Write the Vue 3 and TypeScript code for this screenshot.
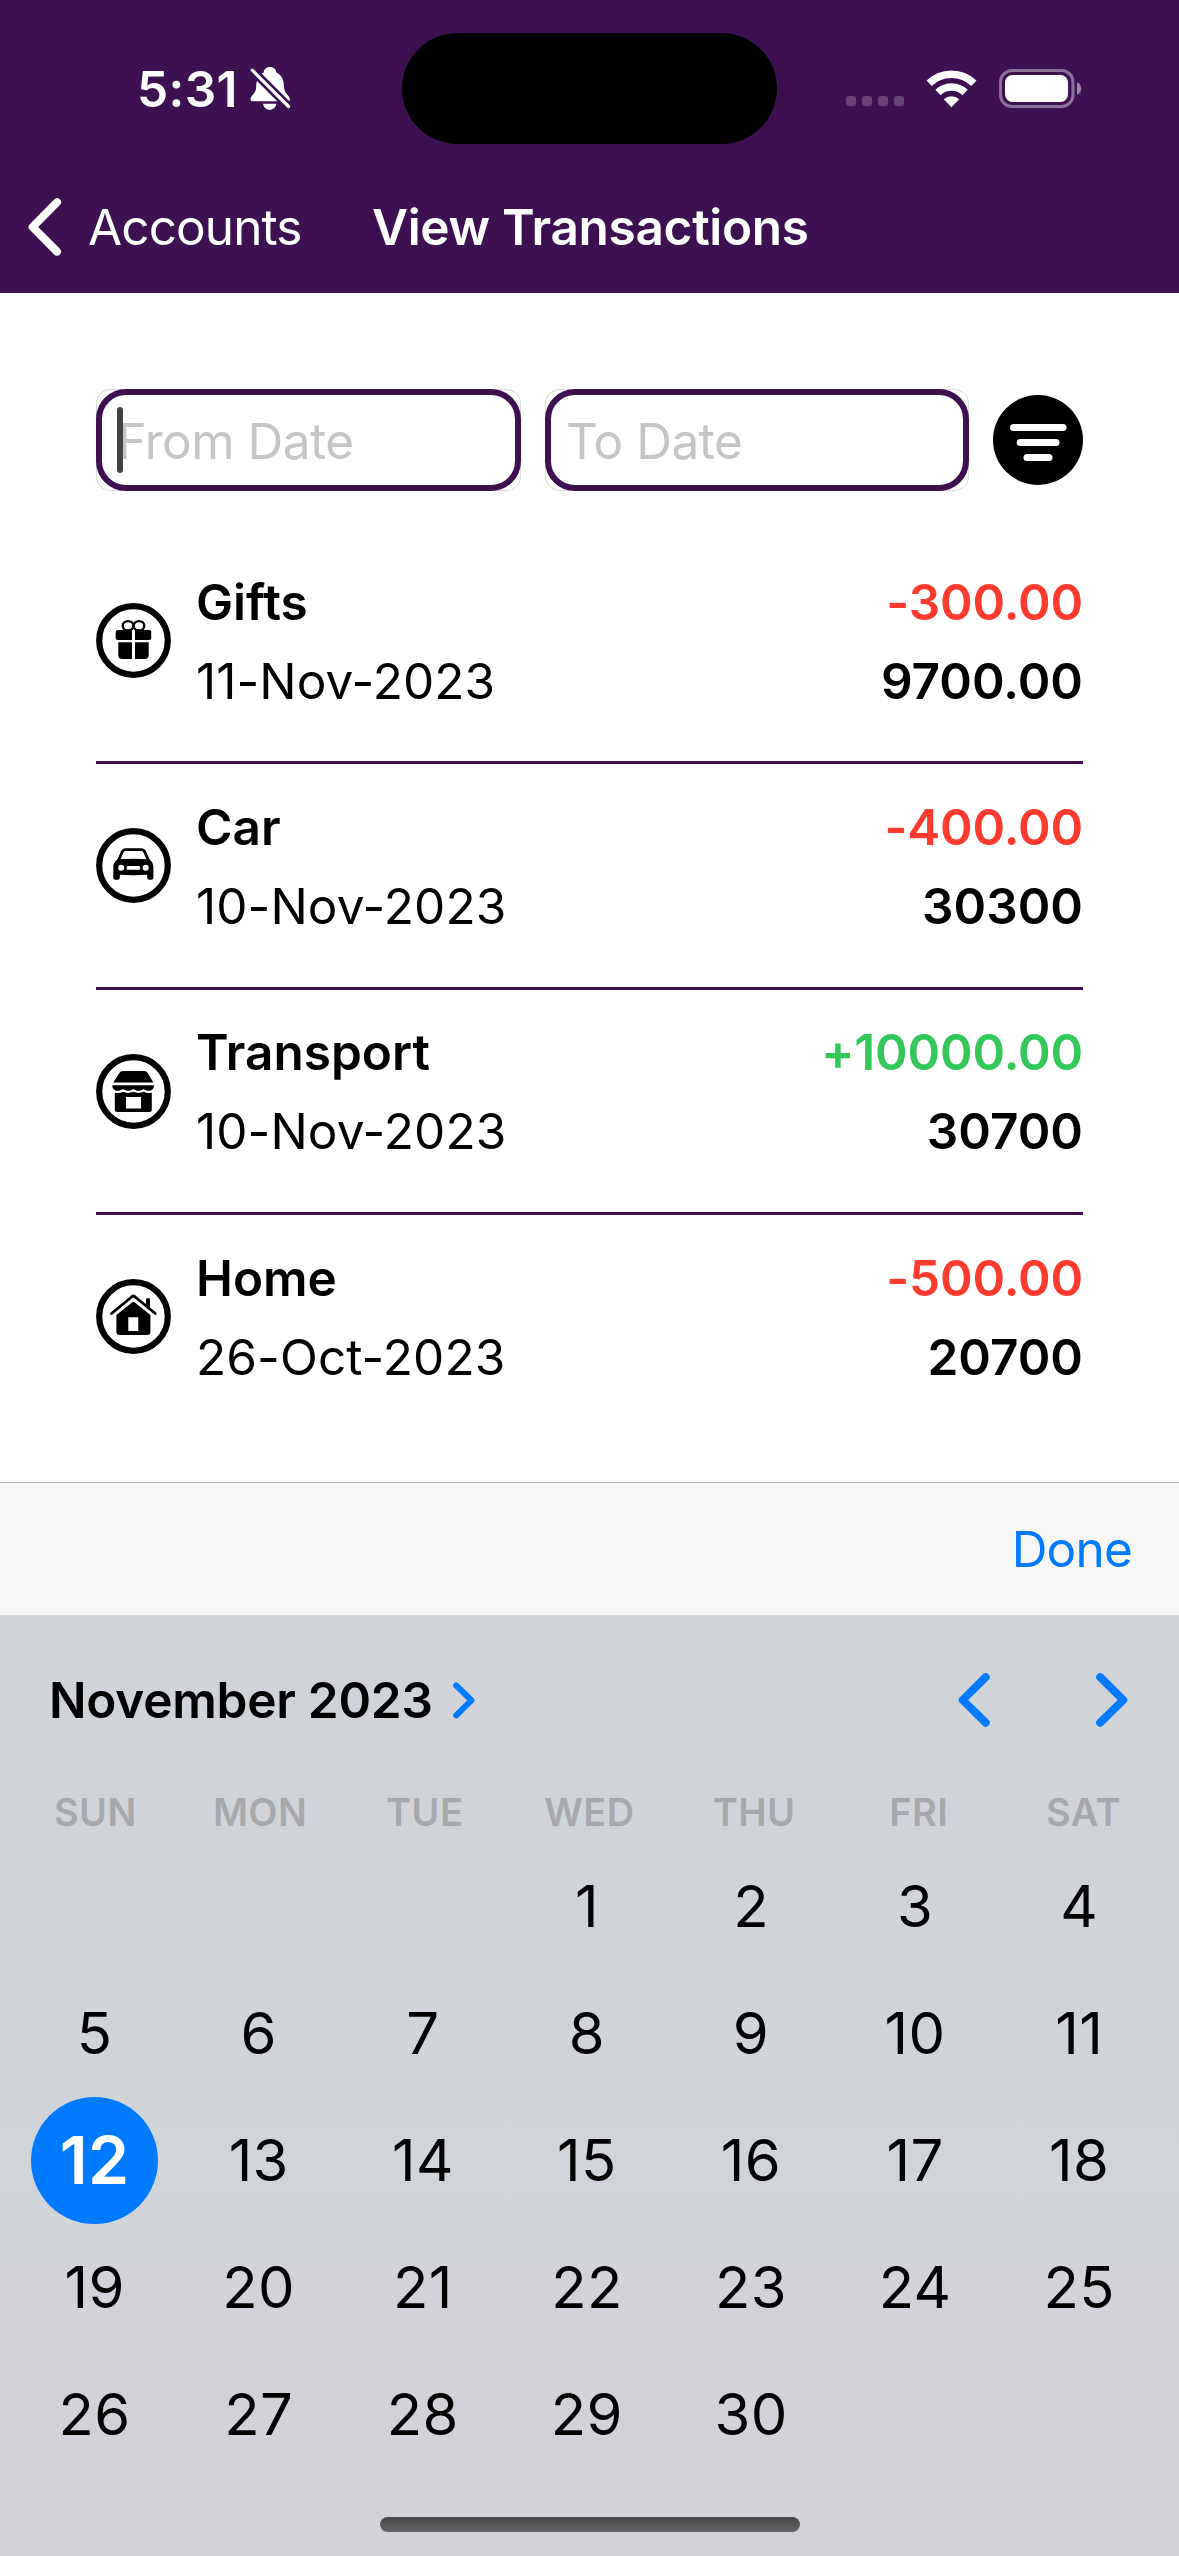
<script setup lang="ts">
type IconName = 'gift' | 'car' | 'shop' | 'home'

interface Transaction {
  icon: IconName
  category: string
  date: string
  amount: string
  balance: string
}

const transactions: Transaction[] = [
  { icon: 'gift', category: 'Gifts', date: '11-Nov-2023', amount: '-300.00', balance: '9700.00' },
  { icon: 'car', category: 'Car', date: '10-Nov-2023', amount: '-400.00', balance: '30300' },
  { icon: 'shop', category: 'Transport', date: '10-Nov-2023', amount: '+10000.00', balance: '30700' },
  { icon: 'home', category: 'Home', date: '26-Oct-2023', amount: '-500.00', balance: '20700' },
]

const weekdays: string[] = ['SUN', 'MON', 'TUE', 'WED', 'THU', 'FRI', 'SAT']
const leadingBlanks = 3
const days: (number | null)[] = [
  ...Array.from({ length: leadingBlanks }, () => null),
  ...Array.from({ length: 30 }, (_, i) => i + 1),
]
const selectedDay = 12
</script>

<template>
  <div class="screen">
    <header class="header">
      <div class="status">
        <div class="status-left">
          <span class="time">5:31</span>
          <svg class="bell" width="41" height="44" viewBox="0 0 41 44">
            <path fill="#fff" d="M20 0c4 0 6 2.600 6.300 5.400C32 8 34 13.500 34 20c0 6.500 6 8.500 6 12.200q0 2-2.200 2H2.700q-2.200 0-2.200-2C.5 28.500 6.200 26.500 6.200 20c0-6.500 2-12 7.500-14.600C14 2.600 16 0 20 0z" />
            <path fill="#fff" d="M13 36.800h13.400c-.6 3.600-3.200 6-6.700 6s-6.100-2.400-6.700-6z" />
            <path stroke="#3d1051" stroke-width="8.500" d="M-1 0L42 43" />
            <path stroke="#fff" stroke-width="3.200" stroke-linecap="round" d="M2.300 3.200L38.600 39.500" />
          </svg>
        </div>
        <div class="island"></div>
        <div class="status-right">
          <div class="dots"><i v-for="n in 4" :key="n"></i></div>
          <svg class="wifi" width="51" height="38" viewBox="0 0 51 38">
            <g fill="none" stroke="#fff" stroke-width="7.600">
              <path d="M3.140 13.340A32.200 32.200 0 0 1 47.860 13.340" />
              <path d="M11.950 22.470A19.500 19.500 0 0 1 39.050 22.470" />
            </g>
            <path fill="#fff" d="M17.800 29.300A11.200 11.200 0 0 1 33.200 29.300L25.500 37.200z" />
          </svg>
          <svg class="battery" width="83" height="40" viewBox="0 0 83 40">
            <rect x="1.500" y="1.500" width="72.500" height="36" rx="11.500" fill="none" stroke="#fff" stroke-opacity=".4" stroke-width="3" />
            <rect x="6" y="6" width="63" height="27" rx="7.500" fill="#fff" />
            <path fill="#fff" fill-opacity=".5" d="M78 13.300c2.600 1 4.200 3.400 4.200 6.200s-1.600 5.200-4.200 6.200z" />
          </svg>
        </div>
      </div>
      <nav class="nav">
        <svg class="back" width="34" height="58" viewBox="0 0 34 58">
          <path d="M29 4.200L4.600 29L29 53.600" fill="none" stroke="#fff" stroke-width="8" stroke-linecap="round" stroke-linejoin="round" />
        </svg>
        <span class="back-label">Accounts</span>
        <span class="title">View Transactions</span>
      </nav>
    </header>

    <main class="content">
      <div class="filters">
        <div class="field"><div class="field-box"><span>From Date</span><i class="caret"></i></div></div>
        <div class="field"><div class="field-box"><span>To Date</span></div></div>
        <svg class="filter" width="90" height="90" viewBox="0 0 90 90">
          <circle cx="45" cy="45" r="45" />
          <g stroke="#fff" stroke-width="7" stroke-linecap="round">
            <path d="M20.500 32.500H70" />
            <path d="M27.200 47.500H63" />
            <path d="M34 62.500H56" />
          </g>
        </svg>
      </div>

      <section class="list">
        <article v-for="t in transactions" :key="t.category" class="row">
          <svg class="icon" width="75" height="75" viewBox="0 0 75 75">
            <circle cx="37.500" cy="37.500" r="34.300" fill="none" stroke="#000" stroke-width="6.200" />
            <g v-if="t.icon === 'gift'">
              <g fill="none" stroke="#000" stroke-width="2.400">
                <ellipse cx="32" cy="22.800" rx="5.300" ry="4.700" />
                <ellipse cx="43" cy="22.800" rx="5.300" ry="4.700" />
              </g>
              <path d="M22 27H36V37H21.700a2 2 0 0 1-2-2V29.300a2.300 2.300 0 0 1 2.300-2.300zM39 27H53a2 2 0 0 1 2.200 2.300V35a2 2 0 0 1-2 2H39z" />
              <path d="M22.300 39.200H36V56H26.300a4 4 0 0 1-4-4zM39 39.200H52.700V52a4 4 0 0 1-4 4H39z" />
            </g>
            <g v-else-if="t.icon === 'car'">
              <path fill="none" stroke="#000" stroke-width="2.800" d="M22.300 33L26.300 23.800Q27.300 21.600 29.600 21.600H45.400Q47.700 21.600 48.700 23.800L52.700 33" />
              <path d="M22 31.300Q37.500 30 53 31.300C55.500 32.500 57.400 35.500 57.400 39V49.500Q57.400 51.700 55.400 51.700H53.300Q51.200 51.700 51.200 49.500V46.800Q37.500 47.500 23.800 46.800V49.500Q23.800 51.700 21.700 51.700H19.500Q17.300 51.700 17.300 49.500V39C17.300 35.500 19.500 32.500 22 31.300z" />
              <g fill="#fff">
                <circle cx="25.200" cy="39.800" r="3" />
                <circle cx="49.700" cy="39.800" r="3" />
                <rect x="30.600" y="38" width="13.600" height="3.800" rx="1.600" />
              </g>
            </g>
            <g v-else-if="t.icon === 'shop'">
              <path d="M27 17H48.200Q50.500 17 51.700 19L57.400 28.500H17.200L23.300 19Q24.500 17 27 17z" />
              <path d="M16.300 31.200H58C58 35 55.500 36.800 53 36.800C50.500 36.800 49.300 36 47.700 35C46 36 44.500 36.800 42.500 36.800S39 36 37.300 35C35.600 36 34.200 36.800 32.200 36.800S28.700 36 27 35C25.300 36 24 36.800 21.500 36.800C18.800 36.800 16.300 35 16.300 31.200z" />
              <path fill-rule="evenodd" d="M18.800 38.700Q24 39.800 27 37.800Q32 40 37.300 37.800Q42.500 40 47.700 37.800Q51 39.800 55.800 38.700V55.500Q55.800 58 53.300 58H21.300Q18.800 58 18.800 55.500zM30 43V54.500H45V43z" />
            </g>
            <g v-else>
              <path fill="none" stroke="#000" stroke-width="2.900" stroke-linecap="round" stroke-linejoin="round" d="M15.500 34.500L36.200 17.500Q37.400 16.600 38.600 17.500L59.300 34.500" />
              <path d="M50 20.200Q50 19.200 51 19.200H53Q54 19.200 54 20.200V29.500L50 26.300z" />
              <path fill-rule="evenodd" d="M36 23.400Q37.400 22.300 38.800 23.400L54.400 36V53Q54.400 56 51.400 56H23.400Q20.400 56 20.400 53V36zM32.300 38.200V52H42.300V38.200z" />
            </g>
          </svg>
          <div class="info">
            <div class="category">{{ t.category }}</div>
            <div class="date">{{ t.date }}</div>
          </div>
          <div class="figures">
            <div class="amount" :class="t.amount.startsWith('+') ? 'credit' : 'debit'">{{ t.amount }}</div>
            <div class="balance">{{ t.balance }}</div>
          </div>
        </article>
      </section>
    </main>

    <div class="toolbar"><span class="done">Done</span></div>

    <section class="picker">
      <div class="month-bar">
        <span class="month">November 2023</span>
        <svg class="month-chevron" width="22" height="37" viewBox="0 0 22 37">
          <path d="M3.200 3.400L18.400 18.300L3.200 33.400" />
        </svg>
        <svg class="prev" width="32" height="54" viewBox="0 0 32 54">
          <path d="M27.700 4.200L4.600 27L27.700 49.700" />
        </svg>
        <svg class="next" width="32" height="54" viewBox="0 0 32 54">
          <path d="M4.200 4.200L27.300 27L4.200 49.700" />
        </svg>
      </div>
      <div class="weekdays">
        <span v-for="w in weekdays" :key="w">{{ w }}</span>
      </div>
      <div class="days">
        <span v-for="(d, i) in days" :key="i" class="day" :class="{ selected: d === selectedDay }">
          <b v-if="d !== null">{{ d }}</b>
        </span>
      </div>
      <div class="home-indicator"></div>
    </section>
  </div>
</template>

<style>
body {
  margin: 0;
  background: #fff;
}
</style>

<style scoped>
.screen {
  width: 1179px;
  height: 2556px;
  display: flex;
  flex-direction: column;
  overflow: hidden;
  background: #fff;
  color: #000;
  font-family: Inter, "Liberation Sans", sans-serif;
  font-size: 49.5px;
  line-height: 60px;
  white-space: nowrap;
}
svg {
  display: block;
  flex: none;
}
.header {
  height: 293px;
  flex: none;
  background: #3d1051;
  color: #fff;
}
.status {
  height: 177px;
  display: grid;
  grid-template-columns: 402px 375px 402px;
  align-items: center;
}
.status-left {
  display: flex;
  align-items: center;
  padding-left: 137px;
}
.time {
  width: 113px;
  font-weight: 600;
  letter-spacing: 0.4px;
}
.island {
  height: 111px;
  border-radius: 56px;
  background: #000;
}
.status-right {
  display: flex;
  align-items: center;
  padding-left: 69px;
}
.dots {
  display: flex;
  gap: 6px;
  padding-top: 25px;
}
.dots i {
  width: 10px;
  height: 10px;
  border-radius: 3px;
  background: #664278;
}
.wifi {
  margin-left: 22px;
}
.battery {
  margin-left: 22px;
}
.nav {
  height: 100px;
  display: flex;
  align-items: center;
}
.back {
  margin-left: 28px;
}
.back-label {
  width: 284px;
  margin-left: 26px;
  letter-spacing: -0.9px;
}
.title {
  font-weight: 600;
  letter-spacing: -0.3px;
}
.content {
  height: 1189px;
  flex: none;
  box-sizing: border-box;
  padding: 96px 96px 0;
}
.filters {
  display: flex;
  align-items: center;
  gap: 24px;
  height: 102px;
}
.field {
  flex: 1;
  height: 102px;
  box-sizing: border-box;
  border-radius: 15px;
  box-shadow: inset 0 0 0 1px #d9d9d9;
}
.field-box {
  position: relative;
  height: 102px;
  box-sizing: border-box;
  border: 6px solid #3d1051;
  border-radius: 30px;
  background: #fff;
  display: flex;
  align-items: center;
  padding: 2px 0 0 15.5px;
  color: #c5c5c7;
  letter-spacing: -0.5px;
}
.caret {
  position: absolute;
  left: 15px;
  top: 12px;
  width: 6px;
  height: 66px;
  border-radius: 3px;
  background: #424242;
}
.list {
  padding-top: 48px;
}
.row {
  height: 225.33px;
  box-sizing: border-box;
  display: flex;
  border-bottom: 3px solid #3d1051;
}
.row:last-child {
  border-bottom: 0;
}
.icon {
  margin-top: 64px;
}
.info {
  padding: 32.7px 0 0 25px;
  flex: 1;
}
.figures {
  padding: 32.7px 0 0;
  text-align: right;
  font-weight: 600;
}
.category {
  font-weight: 600;
}
.amount {
  letter-spacing: -0.15px;
}
.date,
.balance {
  margin-top: 19px;
}
.date {
  letter-spacing: 0.1px;
}
.debit {
  color: #ff3b30;
}
.credit {
  color: #34c759;
}
.toolbar {
  height: 133px;
  flex: none;
  box-sizing: border-box;
  border-top: 1px solid #b2b2b2;
  background: #f7f7f7;
  display: flex;
  justify-content: flex-end;
  align-items: center;
  padding: 0 47px 0 0;
}
.done {
  color: #007aff;
  letter-spacing: -0.8px;
}
.picker {
  flex: 1;
  background: linear-gradient(#d0d4d9 0%, #d1d4d9 60%, #d2d3d8 80%, #d2d3d8 100%);
}
.month-bar {
  height: 170px;
  display: flex;
  align-items: center;
  padding-left: 49px;
}
.month-bar svg path {
  fill: none;
  stroke: #007aff;
  stroke-width: 8px;
  stroke-linecap: round;
  stroke-linejoin: round;
}
.month-bar .month-chevron path {
  stroke-width: 6px;
}
.month {
  width: 404px;
  font-weight: 600;
  letter-spacing: -0.25px;
}
.prev {
  margin-left: 483px;
}
.next {
  margin-left: 106px;
}
.weekdays {
  display: grid;
  grid-template-columns: repeat(7, 164.7px);
  padding-left: 13px;
  height: 55px;
  line-height: 55px;
  text-align: center;
  font-size: 38px;
  font-weight: 600;
  letter-spacing: 0.4px;
  color: #a7a8ac;
}
.days {
  display: grid;
  grid-template-columns: repeat(7, 164.1px);
  grid-auto-rows: 127px;
  padding: 3px 0 0 12.6px;
}
.day {
  display: flex;
  align-items: center;
  justify-content: center;
  font-size: 58px;
  letter-spacing: 0.4px;
}
.day b {
  font-weight: 400;
  padding-bottom: 2px;
}
.day.selected b {
  width: 127px;
  height: 127px;
  padding: 0;
  border-radius: 50%;
  background: #007aff;
  color: #fff;
  font-size: 66px;
  line-height: 127px;
  font-weight: 600;
  text-align: center;
}
.home-indicator {
  width: 420px;
  height: 15px;
  margin: 39px auto 0;
  border-radius: 8px;
  background: linear-gradient(#454648, #646567);
}
</style>
